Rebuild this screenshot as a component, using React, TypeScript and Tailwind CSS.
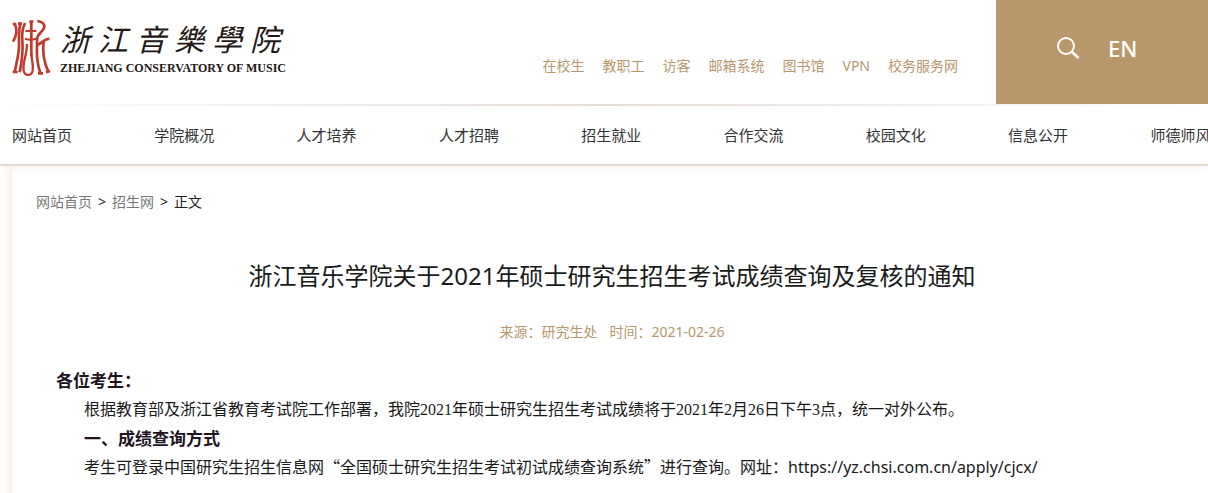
const quickLinks = ["在校生", "教职工", "访客", "邮箱系统", "图书馆", "VPN", "校务服务网"];

const navItems = [
  "网站首页",
  "学院概况",
  "人才培养",
  "人才招聘",
  "招生就业",
  "合作交流",
  "校园文化",
  "信息公开",
  "师德师风",
];

const schoolName = ["浙", "江", "音", "樂", "學", "院"];

const sans = "font-['Noto_Sans','Noto_Sans_CJK_SC',sans-serif]";
const serifDigits = "font-['Liberation_Serif','Noto_Sans_CJK_SC',serif]";

function Emblem() {
  return (
    <svg
      viewBox="0 0 126 192"
      className="h-16 w-[42px] shrink-0"
      fill="none"
      stroke="#c0392b"
      strokeWidth="8"
      strokeLinejoin="round"
      aria-hidden="true"
    >
      <path d="M8 24h11M15 24c7 17 5 35-6 53" />
      <path d="M24 23h12M31 23c-6 26-4 44-4 66 0 28-8 50-13 80M8 168h15" />
      <path d="M45 21c-8 17-10 33-8 51 3 36 0 58-8 97" />
      <path d="M58 17h12M64 17v103" />
      <path d="M51 84c1 34-14 50-10 80 4 17 23 17 27 0 3-22-4-32-4-52" strokeWidth="7" />
      <path d="M46 45h33M45 68c12 6 23 4 36-1" strokeWidth="6" />
      <path d="M82 15c16 2 25 12 19 23-6 12-20 15-20 34 0 38-3 60 10 99M84 172h15" />
      <path d="M82 87c12-4 18-17 36-19M101 77c-5 36 1 62 14 90M108 169l12-4" />
    </svg>
  );
}

function SearchIcon() {
  return (
    <svg
      viewBox="0 0 24 24"
      className="size-6"
      fill="none"
      stroke="currentColor"
      strokeWidth="2"
      aria-hidden="true"
    >
      <circle cx="10" cy="10" r="8" />
      <path d="M15.500 15.500l7 6.500" strokeWidth="2.5" />
    </svg>
  );
}

function Header() {
  return (
    <header className="bg-white">
      <div className="flex h-[104px] items-start">
        <a href="#" className="flex items-start pt-4 pl-[10px] text-[#231815]">
          <Emblem />
          <span className="ml-2 flex w-[224px] flex-col pt-1">
            <span className="flex justify-between pr-1 font-['Noto_Sans_CJK_TC',sans-serif] text-[30px] leading-9 italic">
              {schoolName.map((c) => (
                <span key={c}>{c}</span>
              ))}
            </span>
            <span className="text-center font-['Liberation_Serif',serif] text-xs leading-6 font-bold whitespace-nowrap">
              ZHEJIANG CONSERVATORY OF MUSIC
            </span>
          </span>
        </a>
        <ul className="mr-[38px] ml-auto flex gap-[18px] pt-14 text-sm text-[#b8976b]">
          {quickLinks.map((label) => (
            <li key={label}>
              <a href="#">{label}</a>
            </li>
          ))}
        </ul>
        <div className="flex h-full w-[212px] shrink-0 items-center gap-7 bg-[#b8976b] pb-2 pl-[60px] text-white">
          <button type="button" aria-label="搜索">
            <SearchIcon />
          </button>
          <a href="#" className="text-[22px] leading-8 font-medium">
            EN
          </a>
        </div>
      </div>
      <div className="h-0.5 bg-linear-to-r from-white via-[#e5dcd6] to-white" />
    </header>
  );
}

function MainNav() {
  return (
    <nav className="relative overflow-hidden border-b-2 border-[#e3dace] bg-white shadow-[0_6px_6px_-4px_#f6f0e8]">
      <ul className="grid w-[1435px] grid-cols-10 pl-3 text-[15px] leading-[58px] text-[#333]">
        {navItems.map((label) => (
          <li key={label}>
            <a href="#">{label}</a>
          </li>
        ))}
      </ul>
    </nav>
  );
}

function Breadcrumb() {
  return (
    <div className="flex gap-[6px] text-sm leading-5 text-[#222]">
      <a href="#" className="text-[#777]">
        网站首页
      </a>
      <span>&gt;</span>
      <a href="#" className="text-[#777]">
        招生网
      </a>
      <span>&gt;</span>
      <span>正文</span>
    </div>
  );
}

function Num({ children }: { children: string }) {
  return <span className={serifDigits}>{children}</span>;
}

function Article() {
  return (
    <article>
      <h1 className="pt-[46px] text-center text-2xl leading-9 text-[#1a1a1a]">
        浙江音乐学院关于2021年硕士研究生招生考试成绩查询及复核的通知
      </h1>
      <p className="mt-7 flex justify-center gap-3 text-sm leading-5 text-[#b8976b]">
        <span>来源：研究生处</span>
        <span>时间：2021-02-26</span>
      </p>
      <div className="mt-6 px-5 font-['Noto_Sans_CJK_SC',sans-serif] text-base leading-7 text-[#1a1a1a]">
        <p className="text-[17px] leading-7 font-bold text-[#22141f]">各位考生：</p>
        <p className="pl-7">
          根据教育部及浙江省教育考试院工作部署，我院<Num>2021</Num>年硕士研究生招生考试成绩将于
          <Num>2021</Num>年<Num>2</Num>月<Num>26</Num>日下午<Num>3</Num>点，统一对外公布。
        </p>
        <h2 className="pl-7 text-[17px] leading-7 font-bold text-[#22141f]">
          一、成绩查询方式
        </h2>
        <p className="pl-7">
          考生可登录中国研究生招生信息网“全国硕士研究生招生考试初试成绩查询系统”进行查询。网址：
          <a href="https://yz.chsi.com.cn/apply/cjcx/" className={sans}>
            https://yz.chsi.com.cn/apply/cjcx/
          </a>
        </p>
      </div>
    </article>
  );
}

export default function App() {
  return (
    <div
      lang="zh-CN"
      className="min-h-screen overflow-x-hidden bg-white font-['Noto_Sans','Noto_Sans_CJK_SC',sans-serif]"
    >
      <Header />
      <MainNav />
      <main className="ml-3 bg-white pt-[26px] pr-5 pb-6 pl-6 shadow-[0_0_10px_#e9dccb]">
        <Breadcrumb />
        <Article />
      </main>
    </div>
  );
}
